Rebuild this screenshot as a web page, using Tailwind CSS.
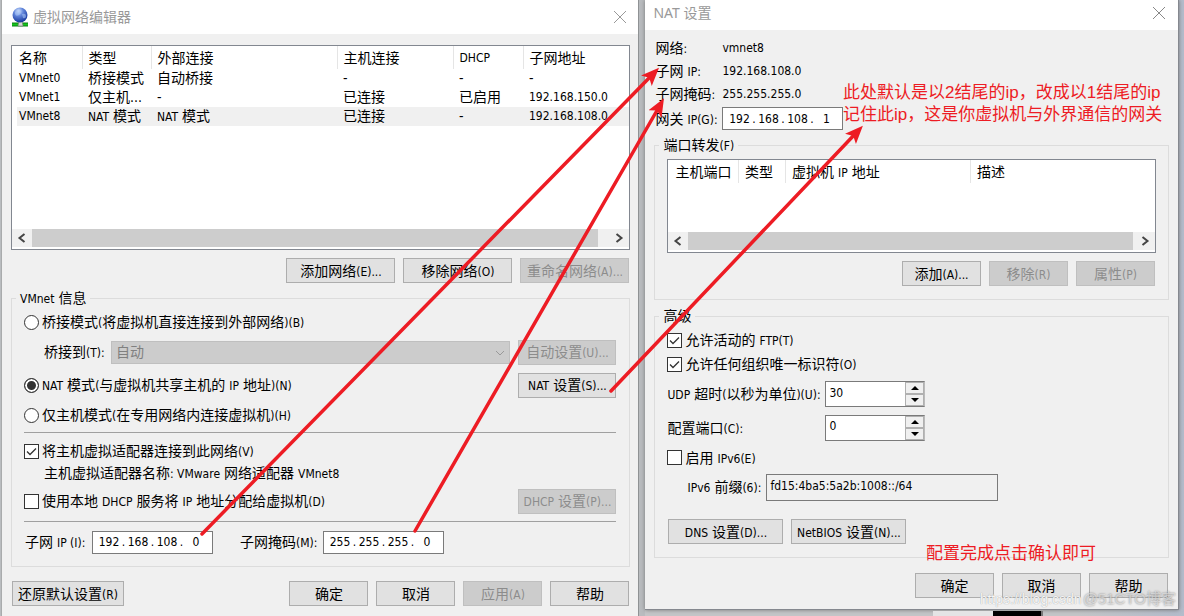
<!DOCTYPE html>
<html lang="zh-CN">
<head>
<meta charset="utf-8">
<title>虚拟网络编辑器</title>
<script src="https://cdn.jsdelivr.net/npm/@tailwindcss/browser@4"></script>
</head>
<body class="relative flex min-h-screen overflow-hidden bg-[#b9bcbf] pl-[2px] font-['DejaVu_Sans_Condensed','Noto_Sans_CJK_SC',sans-serif] text-sm leading-5 text-black">

<!-- Virtual network editor -->
<main class="flex min-w-0 flex-[637] flex-col border-r border-[#8f9294] bg-[#f0f0f0] shadow-[-1px_0_0_#a9abac]">
  <header class="flex h-[34px] items-center bg-white pr-3 pl-2 text-[#999]">
    <svg class="size-5" viewBox="0 0 20 20" aria-hidden="true">
      <defs><radialGradient id="globe" cx="40%" cy="25%" r="75%"><stop offset="0" stop-color="#d9e9ff"/><stop offset=".4" stop-color="#6488dc"/><stop offset="1" stop-color="#16379d"/></radialGradient></defs>
      <path d="M2 17.500h16" stroke="#0a7d12" stroke-width="4"/><path d="M2 17.500h16" stroke="#14c41b" stroke-width="2"/>
      <path d="M9 14h3l1 5H8z" fill="#d4d8d4" stroke="#777" stroke-width=".6"/>
      <circle cx="10" cy="8" r="7.500" fill="url(#globe)"/>
      <path d="M5 5q3-3 5-1t-1 4-4-1zM12 7q4-1 4 2t-3 2z" fill="#a6c3f5" opacity=".6"/>
    </svg>
    <h1 class="ml-[3px] flex-1">虚拟网络编辑器</h1>
    <button aria-label="关闭"><svg class="size-3" viewBox="0 0 12 12" fill="none" stroke="#999"><path d="M0 0l12 12M12 0L0 12"/></svg></button>
  </header>

  <div class="flex flex-1 flex-col pr-[8px] pl-[9px] pt-[11px]">
    <div class="flex h-[205px] flex-col border border-[#828790] bg-white">
      <table class="ml-[5px] table-fixed border-collapse text-left whitespace-nowrap">
        <colgroup><col class="w-[65px]"><col class="w-[69px]"><col class="w-[186px]"><col class="w-[116px]"><col class="w-[70px]"><col></colgroup>
        <thead><tr class="h-[23px] [&>th]:border-r [&>th]:border-[#e5e5e5] [&>th]:p-0 [&>th]:pl-[6px] [&>th]:font-normal">
          <th class="!pl-[2px]">名称</th><th>类型</th><th>外部连接</th><th>主机连接</th><th class="text-xs">DHCP</th><th class="border-r-0!">子网地址</th></tr></thead>
        <tbody class="[&_td]:p-0 [&_td]:pl-[6px] [&_td]:leading-[19px] [&_td:first-child]:pl-[2px]">
          <tr><td class="text-xs">VMnet0</td><td>桥接模式</td><td>自动桥接</td><td>-</td><td>-</td><td>-</td></tr>
          <tr><td class="text-xs">VMnet1</td><td>仅主机...</td><td>-</td><td>已连接</td><td>已启用</td><td class="text-xs">192.168.150.0</td></tr>
          <tr class="bg-[#f0f0f0]"><td class="text-xs">VMnet8</td><td><span class="text-xs">NAT</span> 模式</td><td><span class="text-xs">NAT</span> 模式</td><td>已连接</td><td>-</td><td class="text-xs">192.168.108.0</td></tr>
        </tbody>
      </table>
      <div class="mt-auto mb-[2px] flex h-[18px] bg-[#f0f0f0]">
        <button class="grid w-5 place-items-center" aria-label="向左滚动"><svg class="size-2.5" viewBox="0 0 10 10" fill="none" stroke="#444" stroke-width="2"><path d="M7.500 1l-5 4 5 4"/></svg></button>
        <div class="mr-[11px] flex-1 bg-[#cdcdcd]"></div>
        <button class="grid w-5 place-items-center" aria-label="向右滚动"><svg class="size-2.5" viewBox="0 0 10 10" fill="none" stroke="#444" stroke-width="2"><path d="M2.500 1l5 4-5 4"/></svg></button>
      </div>
    </div>

    <div class="mt-2 flex justify-end gap-2 pr-px">
      <button class="h-[25px] w-[109px] border border-[#adadad] bg-[#e1e1e1]">添加网络<span class="text-xs">(E)...</span></button>
      <button class="h-[25px] w-[109px] border border-[#adadad] bg-[#e1e1e1]">移除网络<span class="text-xs">(O)</span></button>
      <button disabled class="h-[25px] w-[109px] border border-[#bfbfbf] bg-[#ccc] text-[#8c8c8c]">重命名网络<span class="text-xs">(A)...</span></button>
    </div>

    <fieldset class="mt-[5px] min-w-0 border border-[#dcdcdc] pr-[13px] pb-1 pl-3 whitespace-nowrap">
      <legend class="-ml-2 px-1 leading-5"><span class="text-xs">VMnet</span> 信息</legend>
      <label class="flex h-7 items-center gap-[3px]">
        <input type="radio" name="mode" class="size-[15px] appearance-none rounded-full border border-[#333] bg-white checked:bg-[#333] checked:shadow-[inset_0_0_0_2px_#fff]">
        <span>桥接模式<span class="text-xs">(</span>将虚拟机直接连接到外部网络<span class="text-xs">)(B)</span></span>
      </label>
      <div class="flex h-8 items-center pl-5">
        <label for="bridge" class="w-[67px]">桥接到<span class="text-xs">(T):</span></label>
        <div class="relative flex-1">
          <select id="bridge" disabled class="block h-[23px] w-full appearance-none border border-[#bfbfbf] bg-[#ccc] pl-1 text-[#808080] opacity-100"><option>自动</option></select>
          <svg class="absolute top-2 right-1 h-2 w-3" viewBox="0 0 12 8" fill="none" stroke="#999"><path d="M2 2l4 4 4-4"/></svg>
        </div>
        <button disabled class="ml-2 h-[25px] w-[98px] border border-[#bfbfbf] bg-[#ccc] text-[#8c8c8c]">自动设置<span class="text-xs">(U)...</span></button>
      </div>
      <div class="flex h-[34px] items-center justify-between">
        <label class="flex items-center gap-[3px]">
          <input type="radio" name="mode" checked class="size-[15px] appearance-none rounded-full border border-[#333] bg-white checked:bg-[#333] checked:shadow-[inset_0_0_0_2px_#fff]">
          <span><span class="text-xs">NAT</span> 模式<span class="text-xs">(</span>与虚拟机共享主机的 <span class="text-xs">IP</span> 地址<span class="text-xs">)(N)</span></span>
        </label>
        <button class="h-[25px] w-[98px] border border-[#adadad] bg-[#e1e1e1]"><span class="text-xs">NAT</span> 设置<span class="text-xs">(S)...</span></button>
      </div>
      <label class="flex h-[26px] items-center gap-[3px]">
        <input type="radio" name="mode" class="size-[15px] appearance-none rounded-full border border-[#333] bg-white checked:bg-[#333] checked:shadow-[inset_0_0_0_2px_#fff]">
        <span>仅主机模式<span class="text-xs">(</span>在专用网络内连接虚拟机<span class="text-xs">)(H)</span></span>
      </label>
      <hr class="mt-1 border-[#a0a0a0]">
      <label class="mt-2 flex h-5 items-center gap-[3px]">
        <span class="grid size-[15px]">
          <input type="checkbox" checked class="peer col-start-1 row-start-1 appearance-none border border-[#333] bg-white">
          <svg class="invisible col-start-1 row-start-1 peer-checked:visible" viewBox="0 0 15 15" fill="none" stroke="#333" stroke-width="1.300"><path d="M3 7.500l3 3 6-6"/></svg>
        </span>
        <span>将主机虚拟适配器连接到此网络<span class="text-xs">(V)</span></span>
      </label>
      <p class="h-6 pl-5 leading-6">主机虚拟适配器名称<span class="text-xs">: VMware</span> 网络适配器 <span class="text-xs">VMnet8</span></p>
      <div class="flex h-8 items-center justify-between">
        <label class="flex items-center gap-[3px]">
          <input type="checkbox" class="size-[15px] appearance-none border border-[#333] bg-white checked:bg-[#333]">
          <span>使用本地 <span class="text-xs">DHCP</span> 服务将 <span class="text-xs">IP</span> 地址分配给虚拟机<span class="text-xs">(D)</span></span>
        </label>
        <button disabled class="h-[25px] w-[98px] border border-[#bfbfbf] bg-[#ccc] text-[#8c8c8c]"><span class="text-xs">DHCP</span> 设置<span class="text-xs">(P)...</span></button>
      </div>
      <hr class="mt-1 border-[#a0a0a0]">
      <div class="flex h-10 items-center">
        <label for="ip1" class="w-[68px] pl-px">子网 <span class="text-xs">IP (I):</span></label>
        <div class="flex h-[23px] w-[121px] items-center border border-[#7a7a7a] bg-white pl-[5px] text-xs [&>input]:w-[22px] [&>input]:text-center [&>span]:w-[7px] [&>span]:text-center">
          <input id="ip1" value="192"><span>.</span><input aria-label="子网 IP 2" value="168"><span>.</span><input aria-label="子网 IP 3" value="108"><span>.</span><input aria-label="子网 IP 4" value="0">
        </div>
        <label for="mask1" class="ml-[27px] w-[83px]">子网掩码<span class="text-xs">(M):</span></label>
        <div class="flex h-[23px] w-[121px] items-center border border-[#7a7a7a] bg-white pl-[5px] text-xs [&>input]:w-[22px] [&>input]:text-center [&>span]:w-[7px] [&>span]:text-center">
          <input id="mask1" value="255"><span>.</span><input aria-label="子网掩码 2" value="255"><span>.</span><input aria-label="子网掩码 3" value="255"><span>.</span><input aria-label="子网掩码 4" value="0">
        </div>
      </div>
    </fieldset>

    <footer class="mt-[14px] flex gap-2 px-px">
      <button class="mr-auto h-[25px] w-[112px] border border-[#adadad] bg-[#e1e1e1]">还原默认设置<span class="text-xs">(R)</span></button>
      <button class="h-[25px] w-[79px] border border-[#adadad] bg-[#e1e1e1]">确定</button>
      <button class="h-[25px] w-[79px] border border-[#adadad] bg-[#e1e1e1]">取消</button>
      <button disabled class="h-[25px] w-[79px] border border-[#bfbfbf] bg-[#ccc] text-[#8c8c8c]">应用<span class="text-xs">(A)</span></button>
      <button class="h-[25px] w-[79px] border border-[#adadad] bg-[#e1e1e1]">帮助</button>
    </footer>
  </div>
</main>

<!-- NAT settings -->
<div class="ml-[6px] flex min-w-0 flex-[539] flex-col bg-[linear-gradient(90deg,#c4c6c8_80%,#b4bccb_100%)]">
  <section role="dialog" aria-labelledby="nat-title" class="mr-[5px] flex h-[610px] flex-col border-r border-b border-[#85888f] bg-[#f0f0f0] shadow-[0_0_4px_#777]">
    <header class="flex h-[30px] items-center bg-white pr-[13px] pb-[5px] pl-2 text-[#999]">
      <h2 id="nat-title" class="flex-1 font-['Noto_Sans','Noto_Sans_CJK_SC',sans-serif]">NAT 设置</h2>
      <button aria-label="关闭"><svg class="size-3" viewBox="0 0 12 12" fill="none" stroke="#888"><path d="M0 0l12 12M12 0L0 12"/></svg></button>
    </header>
    <div class="flex flex-1 flex-col pr-[9px] pl-[9px] pt-[7px] whitespace-nowrap">
      <dl class="grid grid-cols-[67px_1fr] pl-px leading-[23px] [&>dd]:text-xs [&>dd]:leading-[23px]">
        <dt>网络<span class="text-xs">:</span></dt><dd>vmnet8</dd>
        <dt>子网 <span class="text-xs">IP:</span></dt><dd>192.168.108.0</dd>
        <dt>子网掩码<span class="text-xs">:</span></dt><dd>255.255.255.0</dd>
      </dl>
      <div class="mt-px flex items-center pl-px">
        <label for="gw1" class="w-[67px]">网关 <span class="text-xs">IP(G):</span></label>
        <div class="flex h-[23px] w-[121px] items-center border border-[#7a7a7a] bg-white pl-[5px] text-xs [&>input]:w-[22px] [&>input]:text-center [&>span]:w-[7px] [&>span]:text-center">
          <input id="gw1" value="192"><span>.</span><input aria-label="网关 IP 2" value="168"><span>.</span><input aria-label="网关 IP 3" value="108"><span>.</span><input aria-label="网关 IP 4" value="1">
        </div>
      </div>

      <fieldset class="mt-[5px] min-w-0 border border-[#dcdcdc] px-3 pb-[13px]">
        <legend class="-ml-2 px-1 leading-5">端口转发<span class="text-xs">(F)</span></legend>
        <div class="mt-[4px] flex h-[94px] flex-col border border-[#828790] bg-white">
          <table class="table-fixed border-collapse text-left">
            <colgroup><col class="w-[70px]"><col class="w-[47px]"><col class="w-[185px]"><col></colgroup>
            <thead><tr class="h-[23px] [&>th]:border-r [&>th]:border-[#e5e5e5] [&>th]:p-0 [&>th]:pl-[6px] [&>th]:font-normal"><th class="pl-[7px]!">主机端口</th><th>类型</th><th>虚拟机 <span class="text-xs">IP</span> 地址</th><th class="border-r-0!">描述</th></tr></thead>
          </table>
          <div class="mt-auto mb-[2px] flex h-[18px] bg-[#f0f0f0]">
            <button class="grid w-5 place-items-center" aria-label="向左滚动"><svg class="size-2.5" viewBox="0 0 10 10" fill="none" stroke="#444" stroke-width="2"><path d="M7.500 1l-5 4 5 4"/></svg></button>
            <div class="mr-[2px] flex-1 bg-[#cdcdcd]"></div>
            <button class="grid w-5 place-items-center" aria-label="向右滚动"><svg class="size-2.5" viewBox="0 0 10 10" fill="none" stroke="#444" stroke-width="2"><path d="M2.500 1l5 4-5 4"/></svg></button>
          </div>
        </div>
        <div class="mt-2 flex justify-end gap-2 pr-px">
          <button class="h-[25px] w-[79px] border border-[#adadad] bg-[#e1e1e1]">添加<span class="text-xs">(A)...</span></button>
          <button disabled class="h-[25px] w-[79px] border border-[#bfbfbf] bg-[#ccc] text-[#8c8c8c]">移除<span class="text-xs">(R)</span></button>
          <button disabled class="h-[25px] w-[79px] border border-[#bfbfbf] bg-[#ccc] text-[#8c8c8c]">属性<span class="text-xs">(P)</span></button>
        </div>
      </fieldset>

      <fieldset class="mt-[6px] min-w-0 border border-[#dcdcdc] px-3 pb-[13px]">
        <legend class="-ml-2 px-1 leading-5">高级</legend>
        <label class="mt-[2px] flex h-6 items-center gap-[3px]">
          <span class="grid size-[15px]">
            <input type="checkbox" checked class="peer col-start-1 row-start-1 appearance-none border border-[#333] bg-white">
            <svg class="invisible col-start-1 row-start-1 peer-checked:visible" viewBox="0 0 15 15" fill="none" stroke="#333" stroke-width="1.300"><path d="M3 7.500l3 3 6-6"/></svg>
          </span>
          <span>允许活动的 <span class="text-xs">FTP(T)</span></span>
        </label>
        <label class="flex h-6 items-center gap-[3px]">
          <span class="grid size-[15px]">
            <input type="checkbox" checked class="peer col-start-1 row-start-1 appearance-none border border-[#333] bg-white">
            <svg class="invisible col-start-1 row-start-1 peer-checked:visible" viewBox="0 0 15 15" fill="none" stroke="#333" stroke-width="1.300"><path d="M3 7.500l3 3 6-6"/></svg>
          </span>
          <span>允许任何组织唯一标识符<span class="text-xs">(O)</span></span>
        </label>
        <div class="mt-px flex h-[34px] items-center">
          <label for="udp" class="w-[158px]"><span class="text-xs">UDP</span> 超时<span class="text-xs">(</span>以秒为单位<span class="text-xs">)(U):</span></label>
          <div class="flex h-[26px] w-[100px] border border-[#7a7a7a] border-r-[#bbb] bg-white">
            <input id="udp" value="30" class="w-0 flex-1 pb-[3px] pl-[3px] text-xs">
            <div class="grid w-[19px] grid-rows-2 bg-[#f0f0f0] [&>button]:grid [&>button]:place-items-center [&>button]:border [&>button]:border-[#b0b0b0]">
              <button aria-label="增加"><svg class="h-1 w-2" viewBox="0 0 8 4"><path d="M4 0l4 4H0z"/></svg></button>
              <button aria-label="减少"><svg class="h-1 w-2" viewBox="0 0 8 4"><path d="M4 4L0 0h8z"/></svg></button>
            </div>
          </div>
        </div>
        <div class="flex h-[33px] items-center">
          <label for="port" class="w-[158px]">配置端口<span class="text-xs">(C):</span></label>
          <div class="flex h-[26px] w-[100px] border border-[#7a7a7a] border-r-[#bbb] bg-white">
            <input id="port" value="0" class="w-0 flex-1 pb-[3px] pl-[3px] text-xs">
            <div class="grid w-[19px] grid-rows-2 bg-[#f0f0f0] [&>button]:grid [&>button]:place-items-center [&>button]:border [&>button]:border-[#b0b0b0]">
              <button aria-label="增加"><svg class="h-1 w-2" viewBox="0 0 8 4"><path d="M4 0l4 4H0z"/></svg></button>
              <button aria-label="减少"><svg class="h-1 w-2" viewBox="0 0 8 4"><path d="M4 4L0 0h8z"/></svg></button>
            </div>
          </div>
        </div>
        <label class="flex h-[27px] items-center gap-[3px]">
          <input type="checkbox" class="size-[15px] appearance-none border border-[#333] bg-white checked:bg-[#333]">
          <span>启用 <span class="text-xs">IPv6(E)</span></span>
        </label>
        <div class="flex h-8 items-center pl-5">
          <label for="prefix" class="w-[79px]"><span class="text-xs">IPv6</span> 前缀<span class="text-xs">(6):</span></label>
          <input id="prefix" readonly value="fd15:4ba5:5a2b:1008::/64" class="h-[27px] w-[232px] border border-[#7a7a7a] bg-[#f0f0f0] pb-[3px] pl-[3px] text-xs">
        </div>
        <div class="mt-4 flex gap-2 pl-px">
          <button class="h-[25px] w-[115px] border border-[#adadad] bg-[#e1e1e1]"><span class="text-xs">DNS</span> 设置<span class="text-xs">(D)...</span></button>
          <button class="h-[25px] w-[115px] border border-[#adadad] bg-[#e1e1e1]"><span class="text-xs">NetBIOS</span> 设置<span class="text-xs">(N)...</span></button>
        </div>
      </fieldset>

      <footer class="mt-[15px] flex justify-end gap-2 pr-px">
        <button class="h-[25px] w-[79px] border border-[#adadad] bg-[#e1e1e1]">确定</button>
        <button class="h-[25px] w-[79px] border border-[#adadad] bg-[#e1e1e1]">取消</button>
        <button class="h-[25px] w-[79px] border border-[#adadad] bg-[#e1e1e1]">帮助</button>
      </footer>
    </div>
  </section>
  <div class="mt-px flex flex-1 justify-end pr-[141px]" aria-hidden="true">
    <div class="w-[60px] bg-[#e4e4e5]"></div><div class="w-12 bg-black"></div><div class="w-[2px] bg-[#777]"></div>
  </div>
</div>

<!-- Annotations drawn over the windows -->
<svg class="pointer-events-none absolute top-0 left-0 h-[616px] w-[1184px]" viewBox="0 0 1184 616" fill="none" stroke="#ed1c24" stroke-width="3.500" stroke-linecap="round" aria-hidden="true">
  <defs><marker id="head" markerUnits="userSpaceOnUse" markerWidth="20" markerHeight="18" refX="8" refY="9" orient="auto"><path d="M18 9L0 1.500 4 9 0 16.500z" fill="#ed1c24" stroke="none"/></marker></defs>
  <path d="M202 534L652 75" marker-end="url(#head)"/>
  <path d="M415 531L659 107" marker-end="url(#head)"/>
  <path d="M611 391L856 133" marker-end="url(#head)"/>
</svg>
<div class="absolute top-[82px] left-[843px] font-['Liberation_Sans','Noto_Sans_CJK_SC',sans-serif] text-[17px] leading-[22px] whitespace-nowrap text-[#ed1c24]">
  <p>此处默认是以2结尾的ip，改成以1结尾的ip</p>
  <p>记住此ip，这是你虚拟机与外界通信的网关</p>
</div>
<p class="absolute top-[543px] left-[926px] font-['Liberation_Sans','Noto_Sans_CJK_SC',sans-serif] text-[17px] leading-[22px] whitespace-nowrap text-[#ed1c24]">配置完成点击确认即可</p>
<p class="absolute top-[589px] right-2 flex items-center font-['Liberation_Sans','Noto_Sans_CJK_SC',sans-serif] whitespace-nowrap"><span class="w-[103px] overflow-hidden text-sm text-white/90 [text-shadow:0_0_1px_#888]">https://blog.csdn</span><span class="text-[15px] text-white/50 [text-shadow:0_0_2px_#777]">@51CTO博客</span></p>
</body>
</html>
